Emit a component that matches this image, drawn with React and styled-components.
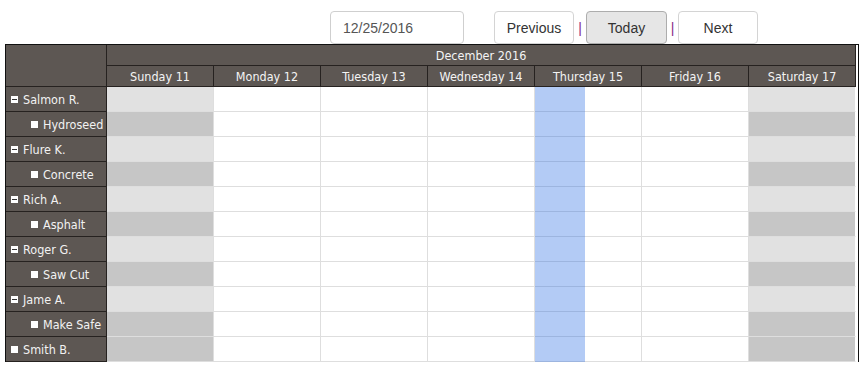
import React from 'react';
import styled, { createGlobalStyle, css } from 'styled-components';

const GlobalStyle = createGlobalStyle`
  html, body {
    margin: 0;
    padding: 0;
    background: #fff;
  }
`;

// Data
const days = ['Sunday 11', 'Monday 12', 'Tuesday 13', 'Wednesday 14', 'Thursday 15', 'Friday 16', 'Saturday 17'];
const TODAY = 4;

const resources = [
  { name: 'Salmon R.', type: 'parent' },
  { name: 'Hydroseed', type: 'child' },
  { name: 'Flure K.', type: 'parent' },
  { name: 'Concrete', type: 'child' },
  { name: 'Rich A.', type: 'parent' },
  { name: 'Asphalt', type: 'child' },
  { name: 'Roger G.', type: 'parent' },
  { name: 'Saw Cut', type: 'child' },
  { name: 'Jame A.', type: 'parent' },
  { name: 'Make Safe', type: 'child' },
  { name: 'Smith B.', type: 'leaf' },
];

// Toolbar
const Page = styled.div`
  width: 864px;
`;

const Toolbar = styled.div`
  display: flex;
  align-items: center;
  padding: 11px 0 0 330px;
  height: 33px;
  font-family: "Liberation Sans", Arial, sans-serif;
  font-size: 14px;
`;

const DateInput = styled.div`
  box-sizing: border-box;
  width: 134px;
  height: 33px;
  border: 1px solid #cfcfcf;
  border-radius: 4px;
  padding: 0 12px;
  display: flex;
  align-items: center;
  color: #555;
  margin-right: 30px;
`;

const NavButton = styled.button`
  box-sizing: border-box;
  width: ${p => p.$w || 80}px;
  height: 33px;
  border: 1px solid ${p => (p.$active ? '#adadad' : '#d4d4d4')};
  border-radius: 4px;
  background: ${p => (p.$active ? '#e6e6e6' : '#fff')};
  font-family: inherit;
  font-size: 14px;
  color: #333;
  padding: 0;
`;

const Sep = styled.span`
  color: #862d86;
  width: ${p => p.$w || 12}px;
  text-align: center;
  font-size: 14px;
`;

// Scheduler grid
const Frame = styled.div`
  margin-left: 5px;
  width: 852px;
  border-top: 1px solid #111;
  border-left: 1px solid #111;
  border-right: 1px solid #111;
`;

const Grid = styled.table`
  border-collapse: separate;
  border-spacing: 0;
  table-layout: fixed;
  width: 850px;
  font-family: "DejaVu Sans Condensed", "DejaVu Sans", Tahoma, sans-serif;
  font-stretch: condensed;
  font-size: 12.5px;
`;

const HeadCell = styled.th`
  background: #5d5753;
  color: #f4f4f4;
  font-weight: normal;
  text-align: center;
  padding: 0;
  height: ${p => p.$h}px;
  border-right: 1px solid #262220;
  border-bottom: 1px solid #262220;
`;

const Corner = styled(HeadCell)`
  width: 100px;
`;

const LabelCell = styled.td`
  background: #5d5753;
  color: #f2f2f2;
  height: 24px;
  padding: 0 0 0 ${p => (p.$child ? 25 : 5)}px;
  border-right: 1px solid #262220;
  border-bottom: 1px solid #262220;
  white-space: nowrap;
  overflow: hidden;
`;

const Label = styled.div`
  display: flex;
  align-items: center;
  gap: 5px;
`;

const Toggle = styled.span`
  position: relative;
  width: 7px;
  height: 7px;
  background: #fff;
  flex: none;
  ${p => p.$minus && css`
    &::after {
      content: '';
      position: absolute;
      left: 1px;
      right: 1px;
      top: 3px;
      height: 1px;
      background: #333;
    }
  `}
`;

const DayCell = styled.td`
  position: relative;
  padding: 0;
  height: 24px;
  border-right: 1px solid #dedede;
  border-bottom: 1px solid #dedede;
  background: ${p => (p.$weekend ? (p.$child ? '#c6c6c6' : '#e1e1e1') : '#fff')};
  ${p => p.$last && css`border-right-color: #fff;`}
  ${p => p.$today && css`
    &::before {
      content: '';
      position: absolute;
      left: 0;
      top: 0;
      bottom: -1px;
      width: 50px;
      background: rgba(38, 106, 226, 0.35);
    }
  `}
`;

const Scheduler = () => (
  <Frame>
    <Grid>
      <colgroup>
        <col style={{ width: 101 }} />
        {days.map(d => <col key={d} style={{ width: 107 }} />)}
      </colgroup>
      <thead>
        <tr>
          <Corner rowSpan={2} />
          <HeadCell colSpan={7} $h={20}>December 2016</HeadCell>
        </tr>
        <tr>
          {days.map(d => (
            <HeadCell key={d} $h={20}>{d}</HeadCell>
          ))}
        </tr>
      </thead>
      <tbody>
        {resources.map(r => (
          <tr key={r.name}>
            <LabelCell $child={r.type === 'child'}>
              <Label>
                <Toggle $minus={r.type === 'parent'} />
                {r.name}
              </Label>
            </LabelCell>
            {days.map((d, i) => (
              <DayCell
                key={d}
                $weekend={i === 0 || i === 6}
                $child={r.type !== 'parent'}
                $today={i === TODAY}
                $last={i === 6}
              />
            ))}
          </tr>
        ))}
      </tbody>
    </Grid>
  </Frame>
);

const App = () => (
  <Page>
    <GlobalStyle />
    <Toolbar>
      <DateInput>12/25/2016</DateInput>
      <NavButton>Previous</NavButton>
      <Sep>|</Sep>
      <NavButton $active $w={81}>Today</NavButton>
      <Sep $w={11}>|</Sep>
      <NavButton>Next</NavButton>
    </Toolbar>
    <Scheduler />
  </Page>
);

export default App;
